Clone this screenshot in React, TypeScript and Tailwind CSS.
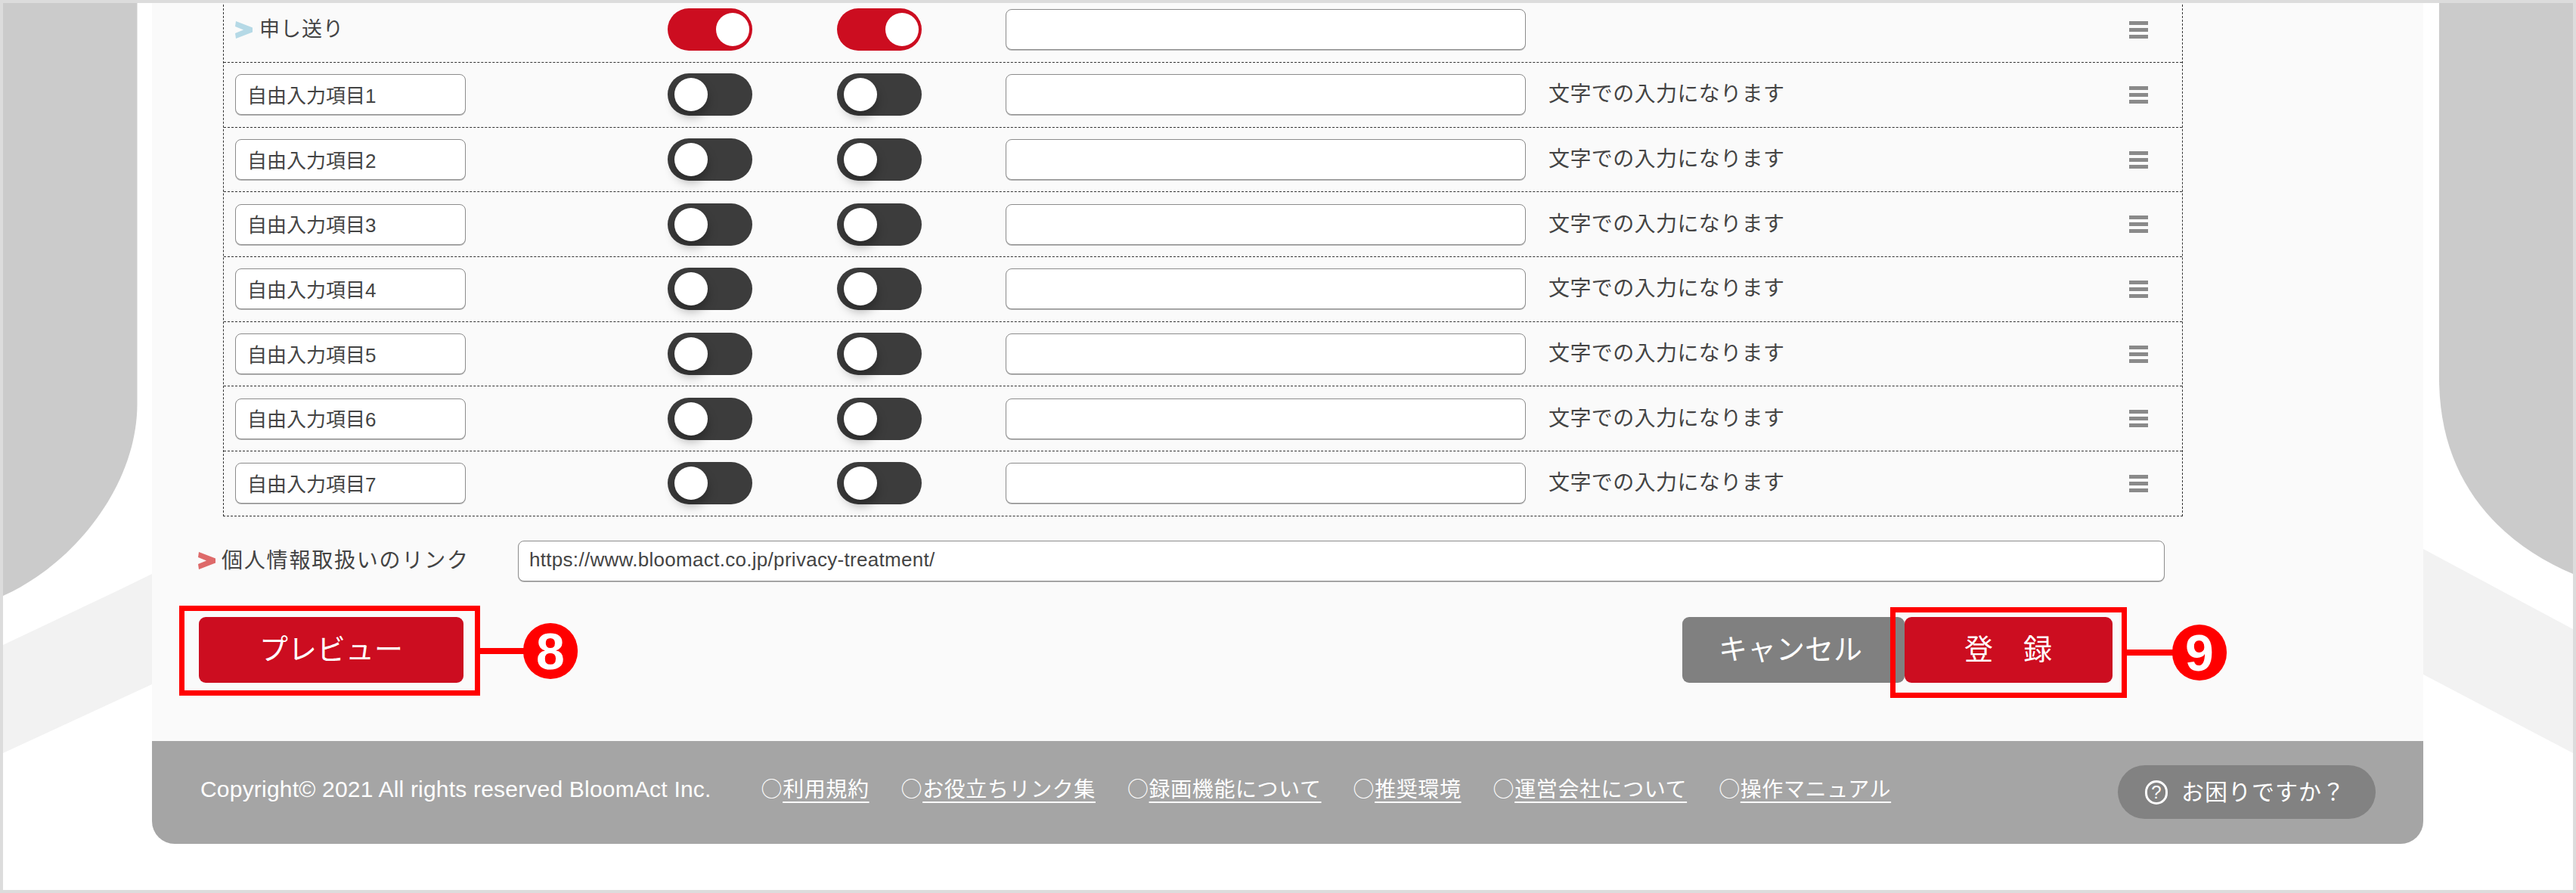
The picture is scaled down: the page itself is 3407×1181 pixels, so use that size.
const fontStack = "font-['Liberation_Sans','Noto_Sans_CJK_JP',sans-serif]";

const freeItems = ["1", "2", "3", "4", "5", "6", "7"];
const footerLinks = ["利用規約", "お役立ちリンク集", "録画機能について", "推奨環境", "運営会社について", "操作マニュアル"];

function Chevron({ color }: { color: string }) {
  return (
    <svg width="23" height="23" viewBox="0 0 23 23" className="shrink-0">
      <polygon points="1,0 23,8.5 23,14.5 1,23 0,16 11,11.5 0,7" fill={color} />
    </svg>
  );
}

function Toggle({ on }: { on: boolean }) {
  return (
    <div
      className={
        on
          ? "w-[112px] h-[56px] rounded-full bg-[#cc0d20] flex items-center justify-end pr-[4px]"
          : "w-[112px] h-[56px] rounded-full bg-[#3c3c3c] flex items-center justify-start pl-[9px]"
      }
    >
      <div
        className={
          on
            ? "w-[44px] h-[44px] rounded-full bg-white"
            : "w-[44px] h-[44px] rounded-full bg-white shadow-[0_8px_14px_rgba(0,0,0,0.3)]"
        }
      />
    </div>
  );
}

function TextBox({ className, value }: { className: string; value?: string }) {
  return (
    <input
      readOnly
      value={value ?? ""}
      className={`h-[54px] pb-[2px] bg-white border border-[#8c8c8c] rounded-[8px] shadow-[0_1px_0_#bdbdbd] text-[26px] text-[#444] outline-none ${fontStack} ${className}`}
    />
  );
}

function MenuIcon() {
  return (
    <div className="w-[25px] flex flex-col gap-[4px] mr-[45px] ml-auto">
      <div className="h-[5px] bg-[#8a8a8a]" />
      <div className="h-[5px] bg-[#8a8a8a]" />
      <div className="h-[5px] bg-[#8a8a8a]" />
    </div>
  );
}

function Row({ first, label, helper }: { first?: boolean; label: React.ReactNode; helper?: string }) {
  return (
    <div
      className={
        first
          ? "h-[86px] flex items-center"
          : "h-[85.7px] flex items-center border-t border-dashed border-[#333]"
      }
    >
      <div className="w-[587px] pl-[15px] flex items-center">{label}</div>
      <div className="w-[224px]">
        <Toggle on={!!first} />
      </div>
      <div className="w-[223px]">
        <Toggle on={!!first} />
      </div>
      <TextBox className="w-[688px]" />
      {helper && <span className="ml-[30px] text-[28px] tracking-[0.4px] text-[#444]">{helper}</span>}
      <MenuIcon />
    </div>
  );
}

function Annotation({ box, num, numClass }: { box: string; num: string; numClass: string }) {
  return (
    <>
      <div className={`absolute border-[7px] border-[#ff0000] ${box}`} />
      <div className={`absolute h-[8px] bg-[#ff0000] ${numClass}`} />
      <div className={`absolute w-[72px] h-[74px] rounded-full bg-[#ff0000] text-white font-bold text-[68px] leading-[74px] text-center ${num === "8" ? "left-[429px] top-[8px]" : "left-[354px] top-[10px]"}`}>
        {num}
      </div>
    </>
  );
}

export default function App() {
  return (
    <div className={`relative w-[3407px] h-[1181px] overflow-hidden bg-white border-4 border-[#dcdcdc] ${fontStack}`}>
      <svg className="absolute left-[-4px] top-[-4px]" width="3407" height="1181" viewBox="0 0 3407 1181">
        <path d="M4 0H181.5V534C181.5 640 100 745 4 788Z" fill="#cbcbcb" />
        <path d="M4 853L160 779L201 759V905L4 996Z" fill="#f2f2f2" />
        <path d="M3226 0H3403V759C3310 720 3226 640 3226 500Z" fill="#cbcbcb" />
        <path d="M3205 726L3403 832V996L3205 892Z" fill="#f2f2f2" />
      </svg>

      <div className="relative ml-[197px] w-[3004px] bg-[#fafafa] rounded-b-[30px]">
        <div className="ml-[94px] w-[2592px]">
          <div className="-mt-[8px] border-x border-b border-dashed border-[#333]">
            <Row
              first
              label={
                <>
                  <Chevron color="#b5d9e6" />
                  <span className="ml-[9px] text-[27px] tracking-[1px] text-[#444]">申し送り</span>
                </>
              }
            />
            {freeItems.map((n) => (
              <Row
                key={n}
                label={<TextBox className="w-[305px] pl-[15px]" value={`自由入力項目${n}`} />}
                helper="文字での入力になります"
              />
            ))}
          </div>
        </div>

        <div className="flex items-center mt-[32px] ml-[61px] pr-[342px]">
          <Chevron color="#de6a6a" />
          <span className="ml-[8px] w-[392px] text-[28px] tracking-[1.8px] text-[#444]">個人情報取扱いのリンク</span>
          <TextBox className="flex-1 pl-[14px] tracking-[0.3px]" value="https://www.bloomact.co.jp/privacy-treatment/" />
        </div>

        <div className="flex justify-between mt-[47px] mb-[77px] ml-[62px] mr-[411px]">
          <div className="relative">
            <button className="w-[350px] h-[87px] rounded-[9px] bg-[#cc0d20] text-white text-[38px]">プレビュー</button>
            <Annotation box="left-[-26px] top-[-15px] w-[398px] h-[119px]" num="8" numClass="left-[372px] top-[41px] w-[58px]" />
          </div>
          <div className="flex">
            <button className="w-[294px] h-[87px] pr-[8px] rounded-[9px] bg-[#808080] text-white text-[38px]">キャンセル</button>
            <div className="relative">
              <button className="relative w-[275px] h-[87px] rounded-[9px] bg-[#cc0d20] text-white text-[38px] tracking-[1px]">登　録</button>
              <Annotation box="left-[-19px] top-[-13px] w-[313px] h-[120px]" num="9" numClass="left-[294px] top-[43px] w-[61px]" />
            </div>
          </div>
        </div>

        <div className="h-[136px] bg-[#a5a5a5] rounded-b-[30px] flex items-center pl-[64px] text-white">
          <span className="text-[30px] tracking-[0.2px] mb-[8px]">Copyright© 2021 All rights reserved BloomAct Inc.</span>
          <div className="flex gap-[42px] ml-[66px] mb-[8px] text-[28px] tracking-[0.6px]">
            {footerLinks.map((l) => (
              <span key={l}>
                <span className="font-['Noto_Sans_CJK_JP',sans-serif]">○</span>
                <span className="underline underline-offset-[6px]">{l}</span>
              </span>
            ))}
          </div>
          <div className="ml-auto mr-[63px] w-[341px] h-[71px] rounded-full bg-[#828282] flex items-center pl-[36px]">
            <span className="w-[30px] h-[32px] rounded-full border-[3px] border-white flex items-center justify-center text-[24px]">?</span>
            <span className="ml-[18px] text-[30px] tracking-[1px]">お困りですか？</span>
          </div>
        </div>
      </div>
    </div>
  );
}
